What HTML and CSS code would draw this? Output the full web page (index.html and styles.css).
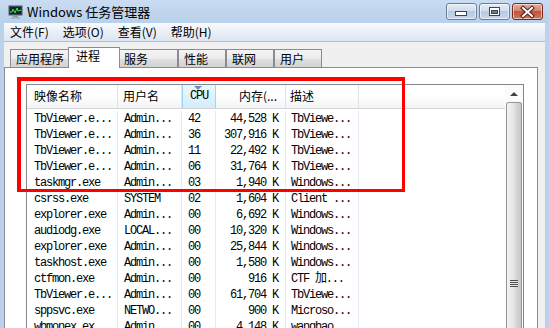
FILE: index.html
```html
<!DOCTYPE html>
<html>
<head>
    <meta charset="utf-8">
    <title>Windows 任务管理器</title>
    <link rel="stylesheet" href="styles.css">
</head>
<body>
    <div class="window">
        <div class="titlebar">
            <svg class="app-icon" width="15" height="14" viewBox="0 0 15 14">
                <rect x="0.5" y="0.5" width="14" height="10" rx="1" fill="#3f4c5c" stroke="#8896a8"/>
                <rect x="2" y="2" width="11" height="7" fill="#10281c"/>
                <polyline points="2,7 4,7 5,4 7,8 9,3 10,6 13,5" fill="none" stroke="#3ee06a" stroke-width="1"/>
                <rect x="5" y="11" width="5" height="1" fill="#8b96a3"/>
                <rect x="3" y="12" width="9" height="2" fill="#a9b3be"/>
            </svg>
            <span class="title">Windows 任务管理器</span>
            <div class="controls">
                <div class="ctl">
                    <svg width="29" height="15" viewBox="0 0 29 15">
                        <rect x="8.5" y="7.5" width="11" height="4" fill="#fff" stroke="#394657"/>
                    </svg>
                </div>
                <div class="ctl">
                    <svg width="29" height="15" viewBox="0 0 29 15">
                        <rect x="9.5" y="3.5" width="10" height="8" fill="#fff" stroke="#394657"/>
                        <rect x="11.5" y="6.5" width="6" height="3" fill="#6a7d95" stroke="#394657"/>
                    </svg>
                </div>
                <div class="ctl close">
                    <svg width="29" height="15" viewBox="0 0 29 15">
                        <path d="M10 4 L19 12 M19 4 L10 12" stroke="#4b1a14" stroke-width="4" stroke-linecap="square"/>
                        <path d="M10 4 L19 12 M19 4 L10 12" stroke="#fff" stroke-width="2" stroke-linecap="square"/>
                    </svg>
                </div>
            </div>
        </div>

        <div class="menubar">
            <span class="menu-item">文件(F)</span>
            <span class="menu-item">选项(O)</span>
            <span class="menu-item">查看(V)</span>
            <span class="menu-item">帮助(H)</span>
        </div>

        <div class="client">
            <div class="tabs">
                <div class="tab wide">应用程序</div>
                <div class="tab active">进程</div>
                <div class="tab wide">服务</div>
                <div class="tab">性能</div>
                <div class="tab">联网</div>
                <div class="tab">用户</div>
            </div>

            <div class="panel">
                <div class="listbox">
                    <div class="list">
                        <div class="row head">
                            <div class="cell">映像名称</div>
                            <div class="cell">用户名</div>
                            <div class="cell sorted"><span class="sort-arrow"></span>CPU</div>
                            <div class="cell num">内存(...</div>
                            <div class="cell">描述</div>
                            <div class="cell"></div>
                        </div>
                        <div class="rows">
                            <div class="row"><div class="cell">TbViewer.e...</div><div class="cell">Admin...</div><div class="cell">42</div><div class="cell num">44,528 K</div><div class="cell">TbViewe...</div><div class="cell"></div></div>
                            <div class="row"><div class="cell">TbViewer.e...</div><div class="cell">Admin...</div><div class="cell">36</div><div class="cell num">307,916 K</div><div class="cell">TbViewe...</div><div class="cell"></div></div>
                            <div class="row"><div class="cell">TbViewer.e...</div><div class="cell">Admin...</div><div class="cell">11</div><div class="cell num">22,492 K</div><div class="cell">TbViewe...</div><div class="cell"></div></div>
                            <div class="row"><div class="cell">TbViewer.e...</div><div class="cell">Admin...</div><div class="cell">06</div><div class="cell num">31,764 K</div><div class="cell">TbViewe...</div><div class="cell"></div></div>
                            <div class="row"><div class="cell">taskmgr.exe</div><div class="cell">Admin...</div><div class="cell">03</div><div class="cell num">1,940 K</div><div class="cell">Windows...</div><div class="cell"></div></div>
                            <div class="row"><div class="cell">csrss.exe</div><div class="cell">SYSTEM</div><div class="cell">02</div><div class="cell num">1,604 K</div><div class="cell">Client ...</div><div class="cell"></div></div>
                            <div class="row"><div class="cell">explorer.exe</div><div class="cell">Admin...</div><div class="cell">00</div><div class="cell num">6,692 K</div><div class="cell">Windows...</div><div class="cell"></div></div>
                            <div class="row"><div class="cell">audiodg.exe</div><div class="cell">LOCAL...</div><div class="cell">00</div><div class="cell num">10,320 K</div><div class="cell">Windows...</div><div class="cell"></div></div>
                            <div class="row"><div class="cell">explorer.exe</div><div class="cell">Admin...</div><div class="cell">00</div><div class="cell num">25,844 K</div><div class="cell">Windows...</div><div class="cell"></div></div>
                            <div class="row"><div class="cell">taskhost.exe</div><div class="cell">Admin...</div><div class="cell">00</div><div class="cell num">1,580 K</div><div class="cell">Windows...</div><div class="cell"></div></div>
                            <div class="row"><div class="cell">ctfmon.exe</div><div class="cell">Admin...</div><div class="cell">00</div><div class="cell num">916 K</div><div class="cell">CTF 加...</div><div class="cell"></div></div>
                            <div class="row"><div class="cell">TbViewer.e...</div><div class="cell">Admin...</div><div class="cell">00</div><div class="cell num">61,704 K</div><div class="cell">TbViewe...</div><div class="cell"></div></div>
                            <div class="row"><div class="cell">sppsvc.exe</div><div class="cell">NETWO...</div><div class="cell">00</div><div class="cell num">900 K</div><div class="cell">Microso...</div><div class="cell"></div></div>
                            <div class="row"><div class="cell">wbmonex.ex...</div><div class="cell">Admin...</div><div class="cell">00</div><div class="cell num">4,148 K</div><div class="cell">wanghao...</div><div class="cell"></div></div>
                            <div class="row"><div class="cell">svchost.exe</div><div class="cell">SYSTEM</div><div class="cell">00</div><div class="cell num">3,212 K</div><div class="cell">Windows...</div><div class="cell"></div></div>
                        </div>
                    </div>
                    <div class="scrollbar">
                        <div class="scroll-up"></div>
                        <div class="thumb"><div class="grip"></div></div>
                    </div>
                </div>
            </div>
        </div>

        <!-- red annotation box drawn over the list -->
        <div class="mark"></div>
    </div>
</body>
</html>
```

FILE: styles.css
```css
html, body {
    margin: 0;
    height: 328px;
    overflow: hidden;
}

body {
    font-family: "Noto Sans CJK SC", sans-serif;
    font-size: 12px;
    color: #000;
    background-color: #bcd2ec;
}

.window {
    position: relative;
    width: 549px;
    height: 328px;
    display: flex;
    flex-direction: column;
    overflow: hidden;
}

/* title bar */
.titlebar {
    height: 23px;
    flex-shrink: 0;
    display: flex;
    align-items: center;
    padding-left: 8px;
    background: linear-gradient(#c9dcf1, #b9d0ea);
}

.app-icon {
    margin-right: 4px;
    margin-top: 1px;
}

.title {
    font-size: 13px;
    line-height: 16px;
}

.controls {
    margin-left: auto;
    align-self: flex-start;
    margin-top: 3px;
    padding-right: 6px;
    display: flex;
    gap: 2px;
}

.ctl {
    width: 31px;
    height: 17px;
    box-sizing: border-box;
    border: 1px solid #6f7e93;
    border-radius: 3px;
    background: linear-gradient(#e4ecf6 0%, #d0ddee 45%, #b7cae3 50%, #c8d8ec 100%);
    box-shadow: inset 0 0 0 1px rgba(255, 255, 255, 0.55);
}

.ctl svg {
    display: block;
}

.ctl.close {
    border-color: #6e2c24;
    background: linear-gradient(#e9aa9e 0%, #d9836f 45%, #c5523a 50%, #d37660 100%);
}

/* menu bar */
.menubar {
    height: 18px;
    flex-shrink: 0;
    margin: 0 4px;
    display: flex;
    align-items: center;
    border-bottom: 1px solid #b3bccd;
    background: linear-gradient(#f8fafd, #dde5f3);
}

.menu-item {
    padding: 0 7px;
    line-height: 16px;
}

.menu-item:first-child {
    padding-left: 6px;
}

/* tabs + panel */
.client {
    flex: 1;
    margin: 0 4px;
    background-color: #f0f0f0;
    display: flex;
    flex-direction: column;
}

.tabs {
    display: flex;
    align-items: flex-end;
    padding: 5px 0 0 6px;
    height: 20px;
}

.tab {
    width: 48px;
    height: 18px;
    box-sizing: border-box;
    padding: 1px 0 0 5px;
    line-height: 16px;
    border: 1px solid #898c95;
    border-bottom: none;
    background: linear-gradient(#f4f4f4 0%, #ececec 50%, #dfdfdf 51%, #d3d3d3 100%);
}

.tab.wide {
    width: 60px;
}

.tab.active {
    position: relative;
    z-index: 1;
    width: 52px;
    height: 21px;
    margin: 0 -2px -1px;
    padding: 0 0 0 7px;
    background: #fff;
}

.panel {
    flex: 1;
    margin-right: 7px;
    padding: 16px 0 0 21px;
    background: #fff;
    border: 1px solid #898c95;
    border-bottom: none;
}

/* process list */
.listbox {
    width: 498px;
    height: 400px;
    box-sizing: border-box;
    border: 1px solid #828790;
    display: flex;
}

.list {
    flex: 1;
    min-width: 0;
}

.row {
    display: grid;
    grid-template-columns: 91px 64px 34px 70px 73px 1fr;
    height: 16px;
    font-family: "Liberation Mono", "Noto Sans CJK SC", monospace;
    font-size: 12px;
    letter-spacing: -1.2px;
    line-height: 16px;
}

.cell {
    box-sizing: border-box;
    border-right: 1px solid #e6ecf5;
    white-space: nowrap;
    overflow: hidden;
    padding-left: 7px;
}

.cell:nth-child(2),
.cell:nth-child(3) {
    padding-left: 6px;
}

.cell:nth-child(5) {
    padding-left: 5px;
}

.cell:last-child {
    border-right: none;
}

.cell.num {
    text-align: right;
    padding: 0 7px 0 0;
}

.rows {
    padding-top: 2px;
}

.row.head {
    height: 23px;
    line-height: 22px;
    font-family: "Noto Sans CJK SC", sans-serif;
    letter-spacing: 0;
    border-bottom: 1px solid #d5d5d5;
    background: linear-gradient(#ffffff 0%, #ffffff 45%, #f3f4f6 100%);
}

.row.head .cell {
    border-right-color: #dfe2e7;
}

.row.head .cell:nth-child(2) {
    padding-left: 5px;
}

.row.head .cell:nth-child(5) {
    padding-left: 4px;
}

.row.head .cell.num {
    padding-right: 8px;
}

.row.head .sorted {
    position: relative;
    padding-left: 8px;
    font-family: "Liberation Mono", monospace;
    letter-spacing: -1.2px;
    border-right-color: #9fd6f2;
    box-shadow: inset 1px 0 0 #9fd6f2;
    background: linear-gradient(#ecf8fe 0%, #def2fc 50%, #d2edfb 100%);
}

.sort-arrow {
    position: absolute;
    left: 12px;
    top: 1px;
    width: 0;
    height: 0;
    border-left: 4px solid transparent;
    border-right: 4px solid transparent;
    border-top: 4px solid #6b8db5;
}

/* scrollbar */
.scrollbar {
    width: 18px;
    box-sizing: border-box;
    padding: 0 1px;
    background: #fbfbfb;
}

.scroll-up {
    height: 17px;
    display: flex;
    align-items: center;
    justify-content: center;
}

.scroll-up::before {
    content: "";
    border-left: 4px solid transparent;
    border-right: 4px solid transparent;
    border-bottom: 4px solid #404040;
}

.thumb {
    height: 362px;
    box-sizing: border-box;
    border: 1px solid #979797;
    border-radius: 2px;
    background: linear-gradient(to right, #f2f2f2 0%, #e6e6e6 45%, #d4d4d4 70%, #c6c6c6 100%);
    display: flex;
    align-items: center;
    justify-content: center;
}

.grip {
    width: 8px;
    height: 7px;
    background: repeating-linear-gradient(#4f4f4f 0 1px, #e8e8e8 1px 2px);
}

/* annotation */
.mark {
    position: absolute;
    left: 17px;
    top: 77px;
    width: 388px;
    height: 115px;
    box-sizing: border-box;
    border: solid #ff0000;
    border-width: 4px 3px 3px 4px;
}
```
